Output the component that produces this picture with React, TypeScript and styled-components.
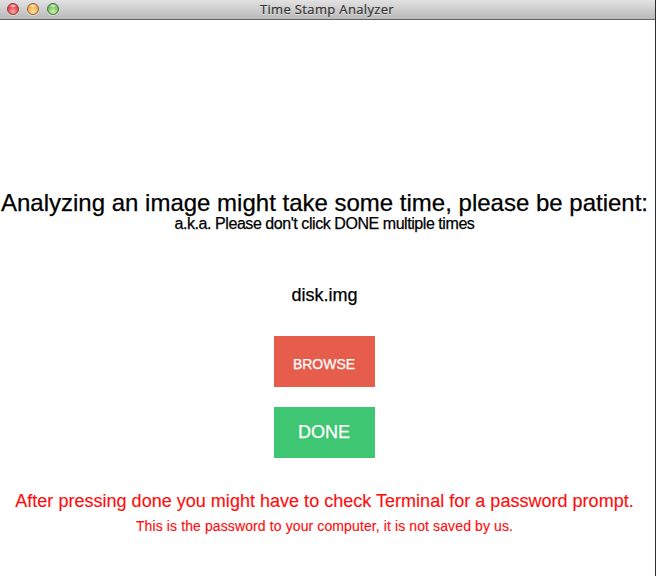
import React from "react";
import styled, { createGlobalStyle } from "styled-components";

const GlobalStyle = createGlobalStyle`
  html, body { margin: 0; padding: 0; background: #fff; }
  * { box-sizing: border-box; }
`;

const Window = styled.div`
  width: 656px;
  height: 576px;
  display: flex;
  flex-direction: column;
  overflow: hidden;
  background: #fff;
  border-right: 1px solid #2b2d35;
  font-family: "Liberation Sans", Arial, sans-serif;
`;

const TitleBar = styled.header`
  flex: none;
  height: 20px;
  display: grid;
  grid-template-columns: 100px 1fr 101px;
  align-items: center;
  background: linear-gradient(#e2e2e2, #b9b9b9);
  border-bottom: 1px solid #656565;
`;

const Controls = styled.div`
  display: flex;
  gap: 8px;
  padding: 0 0 1px 7px;
`;

const Light = styled.span<{ $rim: string; $dark: string; $mid: string; $glow: string }>`
  width: 12px;
  height: 12px;
  border-radius: 50%;
  border: 1px solid ${(p) => p.$rim};
  background:
    radial-gradient(ellipse 4px 2px at 50% 18%, rgba(255, 255, 255, 0.85), rgba(255, 255, 255, 0)),
    radial-gradient(circle at 50% 75%, ${(p) => p.$glow}, ${(p) => p.$mid} 50%, ${(p) => p.$dark});
  box-shadow: 0 1px 0 rgba(255, 255, 255, 0.45);
`;

const Title = styled.h1`
  margin: 0;
  padding-bottom: 1px;
  text-align: center;
  font: 400 13px/18px "Lucida Grande", "Open Sans", sans-serif;
  letter-spacing: 0.35px;
  color: #333;
  -webkit-text-stroke: 0.2px #333;
  text-shadow: 0 1px 0 rgba(255, 255, 255, 0.5);
  white-space: nowrap;
`;

const Content = styled.main`
  width: 649px;
  display: flex;
  flex-direction: column;
  align-items: center;
  padding-top: 169px;
  -webkit-text-stroke-width: 0.25px;
`;

const Line = styled.p<{ $size: number; $height: number; $color?: string; $tracking?: number; $top?: number }>`
  margin: ${(p) => p.$top ?? 0}px 0 0;
  font-size: ${(p) => p.$size}px;
  line-height: ${(p) => p.$height}px;
  letter-spacing: ${(p) => p.$tracking ?? 0}px;
  color: ${(p) => p.$color ?? "#000"};
  white-space: nowrap;
`;

const Warning = styled(Line)`
  color: #ff0d0d;
  -webkit-text-stroke-width: 0.15px;
`;

const Button = styled.button<{ $fill: string; $size: number; $top: number; $drop?: number; $lift?: number }>`
  width: 101px;
  height: 51px;
  margin: ${(p) => p.$top}px 0 0;
  padding: ${(p) => p.$drop ?? 0}px 1px ${(p) => p.$lift ?? 0}px 0;
  border: 0;
  background: ${(p) => p.$fill};
  color: #fff;
  font-family: inherit;
  font-size: ${(p) => p.$size}px;
  line-height: 20px;
`;

export default function App() {
  return (
    <Window>
      <GlobalStyle />
      <TitleBar>
        <Controls>
          <Light $rim="#923a3c" $dark="#c5272d" $mid="#ec5357" $glow="#ffaaa5" />
          <Light $rim="#996331" $dark="#d38a31" $mid="#f4b55c" $glow="#ffe99b" />
          <Light $rim="#44783b" $dark="#56a347" $mid="#83c772" $glow="#d0f8ad" />
        </Controls>
        <Title>Time Stamp Analyzer</Title>
      </TitleBar>
      <Content>
        <Line $size={24} $height={28}>Analyzing an image might take some time, please be patient:</Line>
        <Line $size={16} $height={18} $tracking={-0.44} $top={-2}>
          a.k.a. Please don't click DONE multiple times
        </Line>
        <Line $size={18} $height={20} $top={52}>disk.img</Line>
        <Button $fill="#e65d4c" $size={14} $top={31} $drop={5}>BROWSE</Button>
        <Button $fill="#3ec673" $size={18} $top={20} $lift={2}>DONE</Button>
        <Warning $size={18} $height={20} $tracking={0.02} $top={33}>
          After pressing done you might have to check Terminal for a password prompt.
        </Warning>
        <Warning $size={14} $height={16} $tracking={0.11} $top={7}>
          This is the password to your computer, it is not saved by us.
        </Warning>
      </Content>
    </Window>
  );
}
